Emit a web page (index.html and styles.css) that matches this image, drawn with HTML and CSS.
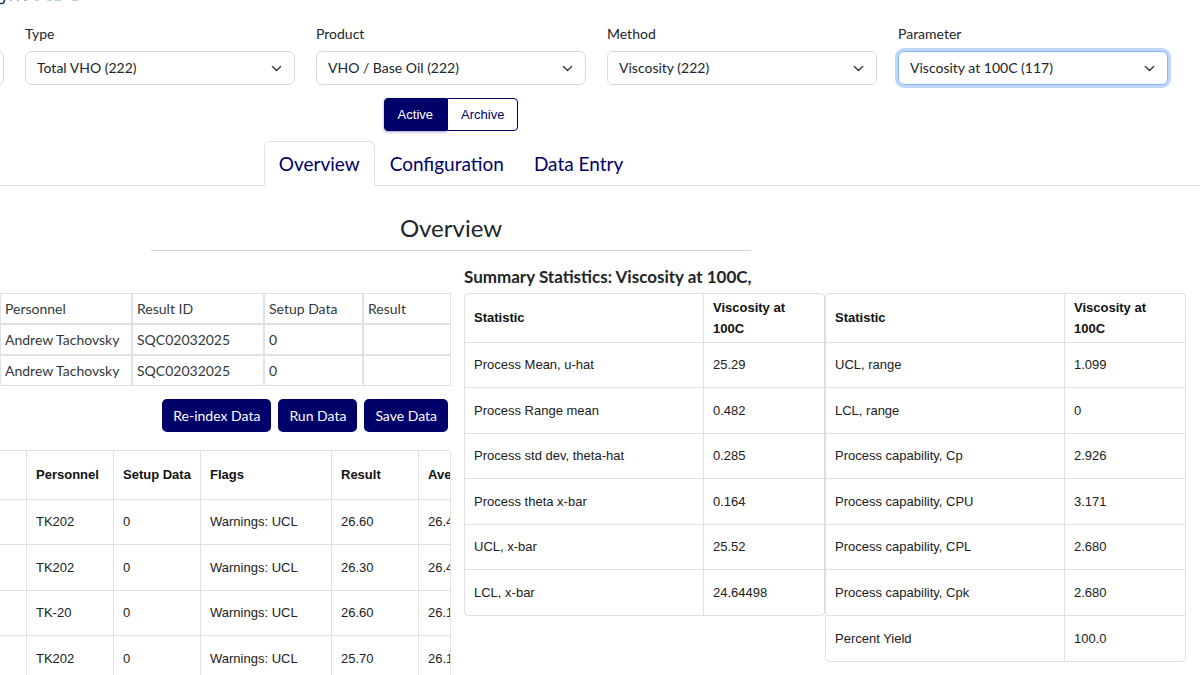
FILE: index.html
```html
<!DOCTYPE html>
<html lang="en">
<head>
<meta charset="utf-8">
<meta name="viewport" content="width=device-width, initial-scale=1">
<title>Overview</title>
<link rel="stylesheet" href="styles.css">
</head>
<body>
<div class="page">
  <header class="brand">
    <svg class="logo" width="90" height="6" viewBox="0 0 90 6" aria-hidden="true">
      <path d="M0 3.5Q4.500 4 4.500 0" fill="none" stroke="#12355f" stroke-width="1.600"/>
      <path d="M10 0h2M17 0h2M24 0h3" stroke="#5f7186" stroke-width="1"/>
      <path d="M35 0h4M47 0h5" stroke="#8fa3b0" stroke-width="1"/>
      <path d="M55 0h6" stroke="#58aeb8" stroke-width="1"/>
      <path d="M72 0h6" stroke="#8fa3b0" stroke-width="1"/>
    </svg>
  </header>

  <form class="filters">
    <div class="field"><select class="select" aria-label="Site"><option></option></select></div>
    <div class="field"><label for="type">Type</label><select class="select" id="type"><option>Total VHO (222)</option></select></div>
    <div class="field"><label for="product">Product</label><select class="select" id="product"><option>VHO / Base Oil (222)</option></select></div>
    <div class="field"><label for="method">Method</label><select class="select" id="method"><option>Viscosity (222)</option></select></div>
    <div class="field"><label for="parameter">Parameter</label><select class="select select-focus" id="parameter"><option>Viscosity at 100C (117)</option></select></div>
  </form>

  <div class="toggle">
    <button class="toggle-btn toggle-on" type="button" aria-pressed="true">Active</button>
    <button class="toggle-btn" type="button" aria-pressed="false">Archive</button>
  </div>

  <nav class="tabs">
    <a class="tab tab-on" href="#overview">Overview</a>
    <a class="tab" href="#configuration">Configuration</a>
    <a class="tab" href="#data-entry">Data Entry</a>
  </nav>

  <h1 class="title" id="overview">Overview</h1>

  <main class="columns">
    <section class="entry">
      <table class="setup">
        <colgroup><col><col class="w-wide"><col class="w-wide"><col class="w-mid"><col class="w-small"></colgroup>
        <tr><th></th><th>Personnel</th><th>Result ID</th><th>Setup Data</th><th>Result</th></tr>
        <tr><td></td><td>Andrew Tachovsky</td><td>SQC02032025</td><td>0</td><td></td></tr>
        <tr><td></td><td>Andrew Tachovsky</td><td>SQC02032025</td><td>0</td><td></td></tr>
      </table>
      <div class="actions">
        <button class="btn" type="button">Re-index Data</button>
        <button class="btn" type="button">Run Data</button>
        <button class="btn" type="button">Save Data</button>
      </div>
      <div class="frame">
        <table class="grid results">
          <colgroup><col class="r-lead"><col class="r-col"><col class="r-col"><col class="r-flags"><col class="r-col"><col class="r-col"></colgroup>
          <thead><tr><th></th><th>Personnel</th><th>Setup Data</th><th>Flags</th><th>Result</th><th>Average</th></tr></thead>
          <tbody>
            <tr><td></td><td>TK202</td><td>0</td><td>Warnings: UCL</td><td>26.60</td><td>26.45</td></tr>
            <tr><td></td><td>TK202</td><td>0</td><td>Warnings: UCL</td><td>26.30</td><td>26.45</td></tr>
            <tr><td></td><td>TK-20</td><td>0</td><td>Warnings: UCL</td><td>26.60</td><td>26.15</td></tr>
            <tr><td></td><td>TK202</td><td>0</td><td>Warnings: UCL</td><td>25.70</td><td>26.15</td></tr>
          </tbody>
        </table>
      </div>
    </section>

    <section class="summary">
      <h2 class="subtitle">Summary Statistics: Viscosity at 100C,</h2>
      <div class="stats">
        <div class="frame">
          <table class="grid">
            <colgroup><col><col class="w-value"></colgroup>
            <thead><tr><th>Statistic</th><th>Viscosity at 100C</th></tr></thead>
            <tbody>
              <tr><td>Process Mean, u-hat</td><td>25.29</td></tr>
              <tr><td>Process Range mean</td><td>0.482</td></tr>
              <tr><td>Process std dev, theta-hat</td><td>0.285</td></tr>
              <tr><td>Process theta x-bar</td><td>0.164</td></tr>
              <tr><td>UCL, x-bar</td><td>25.52</td></tr>
              <tr><td>LCL, x-bar</td><td>24.64498</td></tr>
            </tbody>
          </table>
        </div>
        <div class="frame">
          <table class="grid">
            <colgroup><col><col class="w-value"></colgroup>
            <thead><tr><th>Statistic</th><th>Viscosity at 100C</th></tr></thead>
            <tbody>
              <tr><td>UCL, range</td><td>1.099</td></tr>
              <tr><td>LCL, range</td><td>0</td></tr>
              <tr><td>Process capability, Cp</td><td>2.926</td></tr>
              <tr><td>Process capability, CPU</td><td>3.171</td></tr>
              <tr><td>Process capability, CPL</td><td>2.680</td></tr>
              <tr><td>Process capability, Cpk</td><td>2.680</td></tr>
              <tr><td>Percent Yield</td><td>100.0</td></tr>
            </tbody>
          </table>
        </div>
      </div>
    </section>
  </main>
</div>
</body>
</html>
```
FILE: styles.css
```css
* { box-sizing: border-box; }

body {
  margin: 0;
  height: 100vh;
  overflow: hidden;
  background: #fff;
  color: #212529;
  font-family: Lato, "Liberation Sans", sans-serif;
  font-size: 14px;
  line-height: 20px;
}

.page { margin-left: -298px; }

.brand { height: 24px; padding-left: 298px; }
.logo { display: block; }

.filters {
  display: grid;
  grid-template-columns: repeat(5, 1fr);
  gap: 21px;
  align-items: end;
  padding: 0 32px;
}
.field { display: flex; flex-direction: column; gap: 7px; }
.select {
  appearance: none;
  width: 100%;
  height: 34px;
  padding: 0 11px;
  border: 1px solid #d5dadf;
  border-radius: 6px;
  background: #fff url("data:image/svg+xml,%3Csvg xmlns='http://www.w3.org/2000/svg' viewBox='0 0 16 16'%3E%3Cpath fill='none' stroke='%23343a40' stroke-linecap='round' stroke-linejoin='round' stroke-width='2' d='m2 5 6 6 6-6'/%3E%3C/svg%3E") no-repeat right 12px center / 11px 11px;
  color: #212529;
  font: inherit;
}
.select-focus {
  border-color: #86b7fe;
  outline: 0;
  box-shadow: 0 0 0 3px #bfd7fc;
}

.toggle { display: flex; justify-content: center; margin-top: 13px; }
.toggle-btn {
  height: 33px;
  padding: 0 13px;
  border: 1px solid #00006b;
  border-radius: 0 4px 4px 0;
  background: #fff;
  color: #00006b;
  font-family: "Liberation Sans", Arial, sans-serif;
  font-size: 13px;
}
.toggle-on {
  border-radius: 4px 0 0 4px;
  background: #00006b;
  color: #fff;
  box-shadow: 0 1px 3px #00006b66;
}

.tabs {
  display: flex;
  justify-content: center;
  margin-top: 10px;
  border-bottom: 1px solid #dee2e6;
}
.tab {
  margin-bottom: -1px;
  padding: 7px 14px;
  border: 1px solid transparent;
  border-radius: 6px 6px 0 0;
  color: #00006b;
  font-size: 19px;
  line-height: 29px;
  text-decoration: none;
}
.tab-on { border-color: #dee2e6 #dee2e6 #fff; background: #fff; }

.title {
  width: 40%;
  margin: 24px auto 0;
  padding-bottom: 4px;
  border-bottom: 1px solid #cfd3d6;
  font-size: 24px;
  font-weight: 400;
  line-height: 36px;
  text-align: center;
}

.columns {
  display: grid;
  grid-template-columns: 1fr 1fr;
  gap: 13px;
  padding: 0 14px 0 27px;
}
.entry { min-width: 0; padding-top: 42px; }
.summary { min-width: 0; padding-top: 12px; }
.subtitle {
  margin: 0 0 3px;
  font-size: 17px;
  font-weight: 700;
  line-height: 27px;
}

.setup {
  width: 100%;
  table-layout: fixed;
  border-collapse: separate;
  border-spacing: 0;
  color: #33383c;
}
.setup th, .setup td {
  height: 31px;
  padding: 0 4px;
  border: 1px solid #dee2e6;
  font-weight: 400;
  text-align: left;
}
.w-wide { width: 132px; }
.w-mid { width: 99px; }
.w-small { width: 88px; }

.actions {
  display: flex;
  justify-content: flex-end;
  gap: 7px;
  padding: 13px 3px 18px;
}
.btn {
  height: 33px;
  padding: 0 11px;
  border: 0;
  border-radius: 5px;
  background: #00006b;
  color: #fff;
  font: inherit;
}

.frame {
  overflow: hidden;
  border: 1px solid #e0e0e0;
  border-radius: 4px;
}
.grid {
  width: 100%;
  table-layout: fixed;
  border-collapse: separate;
  border-spacing: 0;
  color: #212121;
  font-family: "Liberation Sans", Arial, sans-serif;
  font-size: 13px;
  line-height: 21px;
}
.grid th, .grid td {
  padding: 0 8px 1px 9px;
  border-right: 1px solid #e0e0e0;
  border-bottom: 1px solid #e0e0e0;
  text-align: left;
}
.grid th { height: 49px; color: #111; }
.grid td { height: 45px; }
.grid tr:nth-child(even) td { height: 46px; }
.grid th:last-child, .grid td:last-child { border-right: 0; }
.grid tbody tr:last-child td { height: 45px; border-bottom: 0; }
.w-value { width: 120px; }

.results { width: 772px; }
.r-lead { width: 297px; }
.r-col { width: 87px; }
.r-flags { width: 131px; }

.stats {
  display: grid;
  grid-template-columns: 1fr 1fr;
  align-items: start;
}
```
